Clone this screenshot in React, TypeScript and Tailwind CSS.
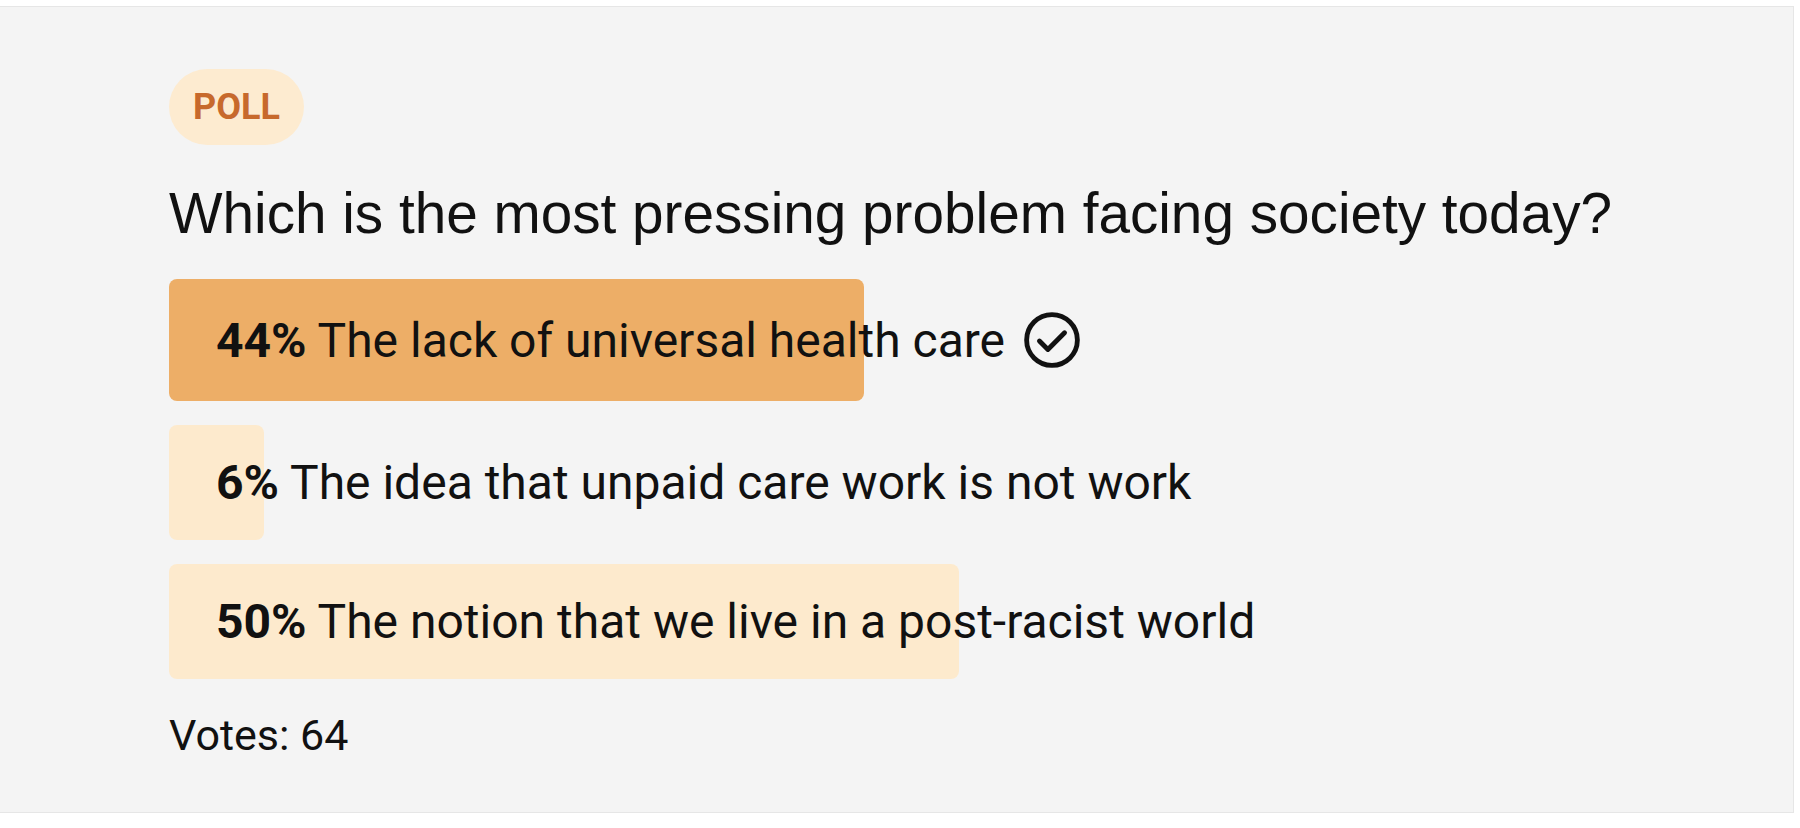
import React from 'react'

type Option = {
  label: string
  percent: number
  picked?: boolean
}

const options: Option[] = [
  { label: 'The lack of universal health care', percent: 44, picked: true },
  { label: 'The idea that unpaid care work is not work', percent: 6 },
  { label: 'The notion that we live in a post-racist world', percent: 50 },
]

function CheckCircle() {
  return (
    <svg viewBox="0 0 24 24" className="my-[1px] ml-[18px] h-[58px] w-[58px] shrink-0" fill="none" stroke="#111" strokeWidth={2} strokeLinecap="round" strokeLinejoin="round">
      <circle cx="12" cy="12" r="10.5" />
      <path d="M6.8 12.4 L10.3 15.9 L17.2 9" />
    </svg>
  )
}

function PollOption({ option, highlight }: { option: Option; highlight: boolean }) {
  return (
    <div className="relative flex min-h-[115px] items-center py-[31px] pl-[47px]">
      <div
        className={`absolute inset-y-0 left-0 rounded-[8px] ${highlight ? 'bg-[#edae67]' : 'bg-[#fdeacd]'}`}
        style={{ width: `${option.percent}%` }}
      />
      <div className="relative flex items-center text-[48px] leading-[53px] text-[#111] font-['Roboto',sans-serif]">
        <span className="whitespace-pre">
          <b className="font-bold">{option.percent}%</b> {option.label}
        </span>
        {option.picked && <CheckCircle />}
      </div>
    </div>
  )
}

export default function App() {
  return (
    <div className="min-h-screen bg-white pt-[6px] pr-[6px]">
      <div className="border-y border-r border-[#e6e6e6] bg-[#f4f4f4] pt-[62px] pr-[45px] pb-[52px] pl-[169px]">
        <div className="flex">
          <span className="flex h-[76px] items-center rounded-full bg-[#fdebd0] px-[24px] text-[36px] leading-none font-bold text-[#c7692c] font-['Roboto',sans-serif]">
            POLL
          </span>
        </div>

        <h2 className="mt-[35px] text-[56.7px] leading-[67px] text-[#111] font-['Liberation_Sans',Arial,sans-serif]">
          Which is the most pressing problem facing society today?
        </h2>

        <div className="mt-[32px] flex flex-col gap-[24px]">
          {options.map((o) => (
            <PollOption key={o.label} option={o} highlight={o.picked === true} />
          ))}
        </div>

        <div className="mt-[32px] text-[43px] leading-[49px] text-[#111] font-['Roboto',sans-serif]">Votes: 64</div>
      </div>
    </div>
  )
}
